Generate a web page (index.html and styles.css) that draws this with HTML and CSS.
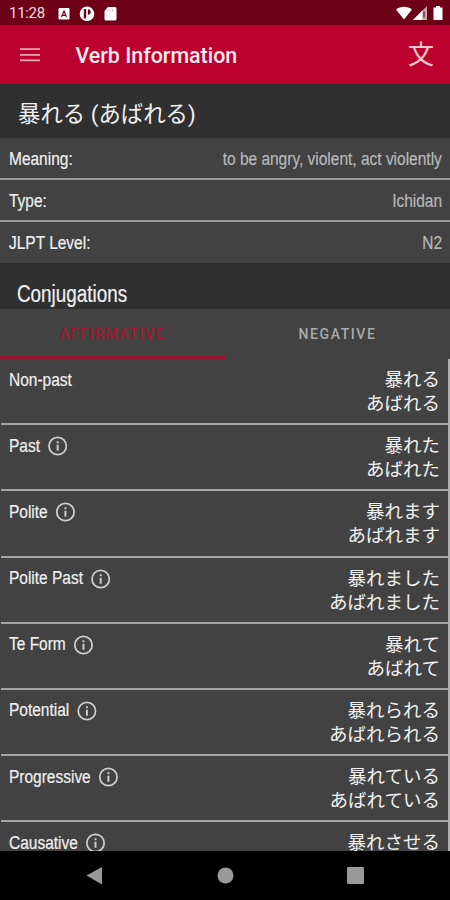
FILE: index.html
```
<!DOCTYPE html>
<html lang="en">
<head>
    <meta charset="utf-8"/>
    <title>Verb Information</title>
    <link rel="stylesheet" href="styles.css">
</head>
<body>
    <svg width="0" height="0" class="defs">
        <symbol id="info" viewBox="0 0 20 20" preserveAspectRatio="none">
            <circle cx="10" cy="10" r="8.7" fill="none" stroke="currentColor" stroke-width="1.8"/>
            <path d="M9 5.2h2v2H9zM9 8.8h2v6H9z" fill="currentColor"/>
        </symbol>
    </svg>
    <div class="status-bar">
        <span class="clock">11:28</span>
        <svg class="notifications" width="60" height="16" viewBox="0 0 60 16">
            <rect x="0.5" y="3" width="11" height="11.5" rx="1" fill="#fff"/>
            <path d="M3.5 12L6 6 8.500 12M4.300 10.300h3.400" fill="none" stroke="#6d0017" stroke-width="1.2"/>
            <circle cx="29" cy="8.8" r="7.3" fill="#fff"/>
            <path d="M27 4v9.500" stroke="#6d0017" stroke-width="2.400"/>
            <path d="M30 4.300a2.700 2.700 0 0 1 0 5.400z" fill="#6d0017"/>
            <path d="M50 2h7a1.500 1.500 0 0 1 1.500 1.500v10.500a1.500 1.500 0 0 1-1.500 1.500h-9a1.500 1.500 0 0 1-1.500-1.500V6z" fill="#fff"/>
            <path d="M49.500 4.500v2M52 4v2.500M54.500 4v2.500" stroke="#e3c6cc" stroke-width="1"/>
        </svg>
        <svg class="signals" width="48" height="16" viewBox="0 0 48 16">
            <path d="M0 4.500C4.500 0.700 11.500 0.700 16 4.500L8 14.500z" fill="#fff"/>
            <path d="M31 1v14H17z" fill="#c9a5ad"/>
            <path d="M26.500 5.500v9.500H17z" fill="#fff"/>
            <path d="M28 6.500v6" stroke="#6d0017" stroke-width="1.200"/>
            <path d="M40 1h4v1.500h2.500v12.500h-9v-12.500H40z" fill="#fff"/>
        </svg>
    </div>
    <div class="app-bar">
        <svg width="20" height="16" viewBox="0 0 20 16">
            <path d="M0 2.200h20M0 7.800h20M0 13.400h20" stroke="#f3a9b4" stroke-width="1.800"/>
        </svg>
        <h1>Verb Information</h1>
        <span class="kanji">文</span>
    </div>
    <h2 class="verb">暴れる (あばれる)</h2>
    <div class="details">
        <div class="detail"><span class="narrow">Meaning:</span><span class="narrow value">to be angry, violent, act violently</span></div>
        <div class="detail"><span class="narrow">Type:</span><span class="narrow value">Ichidan</span></div>
        <div class="detail"><span class="narrow">JLPT Level:</span><span class="narrow value">N2</span></div>
    </div>
    <h2 class="conjugations"><span class="narrow">Conjugations</span></h2>
    <div class="tabs">
        <div class="tab active">AFFIRMATIVE</div>
        <div class="tab">NEGATIVE</div>
    </div>
    <div class="forms">
        <div class="form">
            <div class="name narrow">Non-past</div>
            <div class="ja">暴れる<br/>あばれる</div>
        </div>
        <div class="form">
            <div class="name narrow">Past<svg><use href="#info"/></svg></div>
            <div class="ja">暴れた<br/>あばれた</div>
        </div>
        <div class="form">
            <div class="name narrow">Polite<svg><use href="#info"/></svg></div>
            <div class="ja">暴れます<br/>あばれます</div>
        </div>
        <div class="form">
            <div class="name narrow">Polite Past<svg><use href="#info"/></svg></div>
            <div class="ja">暴れました<br/>あばれました</div>
        </div>
        <div class="form">
            <div class="name narrow">Te Form<svg><use href="#info"/></svg></div>
            <div class="ja">暴れて<br/>あばれて</div>
        </div>
        <div class="form">
            <div class="name narrow">Potential<svg><use href="#info"/></svg></div>
            <div class="ja">暴れられる<br/>あばれられる</div>
        </div>
        <div class="form">
            <div class="name narrow">Progressive<svg><use href="#info"/></svg></div>
            <div class="ja">暴れている<br/>あばれている</div>
        </div>
        <div class="form">
            <div class="name narrow">Causative<svg><use href="#info"/></svg></div>
            <div class="ja">暴れさせる<br/>あばれさせる</div>
        </div>
    </div>
    <div class="nav-bar">
        <svg width="450" height="49" viewBox="0 0 450 49">
            <path d="M86.500 24.500L102 16v17.500z" fill="#999"/>
            <circle cx="225.500" cy="24.500" r="8" fill="#999"/>
            <rect x="347" y="16" width="17" height="17" rx="1" fill="#999"/>
        </svg>
    </div>
</body>
</html>
```
FILE: styles.css
```
* {
    box-sizing: border-box;
}
body {
    margin: 0;
    height: 900px;
    display: flex;
    flex-direction: column;
    overflow: hidden;
    background: #303030;
    color: #f0f0f0;
    font-family: Roboto, "Noto Sans CJK JP", sans-serif;
}
h1, h2 {
    margin: 0;
    font-weight: normal;
}
.defs {
    position: absolute;
}
/* condensed lettering */
.narrow {
    display: inline-block;
    font-family: "Liberation Sans", Arial, sans-serif;
    font-size: 18px;
    white-space: nowrap;
    transform: scaleX(0.86);
    transform-origin: left;
    -webkit-text-stroke: 0.2px;
}
.status-bar {
    flex: none;
    height: 25px;
    padding: 0 6px 0 9px;
    display: flex;
    align-items: center;
    background: #6d0017;
}
.clock {
    width: 49px;
    padding-top: 1px;
    font-size: 15px;
    letter-spacing: -0.3px;
    color: #f3dde1;
}
.signals {
    margin-left: auto;
}
.app-bar {
    flex: none;
    height: 59px;
    padding: 0 16px 0 20px;
    display: flex;
    align-items: center;
    background: #bb002d;
}
.app-bar h1 {
    margin-left: 35.5px;
    padding-top: 1px;
    font-size: 21.4px;
    font-weight: 500;
    color: #ffeaed;
}
.kanji {
    margin-left: auto;
    font-family: "Noto Sans CJK JP", sans-serif;
    font-size: 26px;
    font-weight: 400;
    line-height: 50px;
    padding-bottom: 3px;
    color: #ffc9d0;
}
.verb {
    flex: none;
    height: 54px;
    padding-left: 18px;
    font-size: 22.4px;
    line-height: 61px;
}
.details {
    flex: none;
    height: 125px;
    background: #424242;
}
.detail {
    height: 42px;
    padding: 0 8px 0 9px;
    display: flex;
    justify-content: space-between;
    border-bottom: 2px solid #999;
    line-height: 42px;
}
.detail:last-child {
    border-bottom: 0;
}
.value {
    color: #b8b8b8;
    transform-origin: right;
}
.conjugations {
    flex: none;
    height: 46px;
    padding-left: 17px;
    line-height: 62px;
}
.conjugations .narrow {
    font-size: 23px;
    transform: scaleX(0.82);
}
.tabs {
    flex: none;
    height: 50px;
    display: flex;
    background: #424242;
}
.tab {
    width: 50%;
    text-align: center;
    font-size: 14px;
    font-weight: 500;
    letter-spacing: 1.6px;
    line-height: 51px;
    color: #aaa;
}
.tab.active {
    border-bottom: 3px solid #96182f;
    color: #a5142f;
}
.forms {
    flex: 1;
    overflow: hidden;
    background: #424242;
    border-left: 1px solid #424242;
    border-right: 2px solid #b0b0b0;
}
.form {
    height: 66.2px;
    padding: 7px 8px 0;
    display: flex;
    justify-content: space-between;
    border-bottom: 2px solid #a4a4a4;
}
.name {
    height: 28px;
    display: flex;
    align-items: center;
    gap: 9px;
}
/* widened so the icon stays round inside the condensed label */
.name svg {
    width: 23.2px;
    height: 20px;
    color: #ccc;
}
.ja {
    font-family: "Noto Sans CJK JP", sans-serif;
    font-size: 18.5px;
    line-height: 24px;
    text-align: right;
}
.nav-bar {
    flex: none;
    height: 49px;
    background: #000;
}
.nav-bar svg {
    display: block;
}
```
